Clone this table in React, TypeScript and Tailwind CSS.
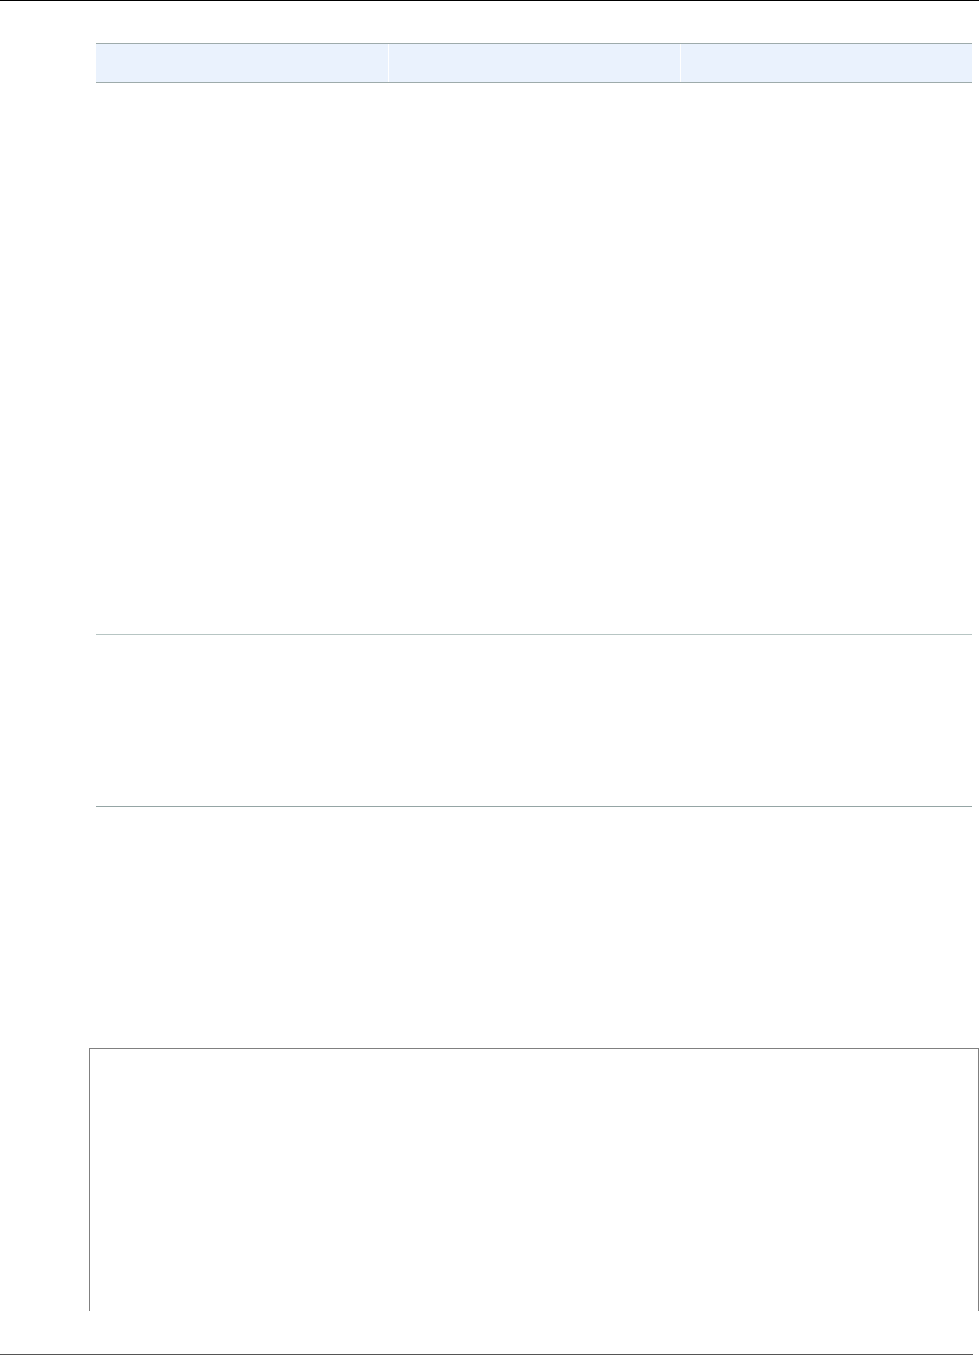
import React from "react";

const App: React.FC = () => {
  return (
    <div className="w-[979px] h-[1355px] bg-white border-t border-black overflow-hidden">
      {/* Table */}
      <div className="ml-[96px] mt-[42px] w-[876px]">
        <div className="grid grid-cols-[292px_292px_292px] h-[40px] bg-[#eaf2fd] border-t border-b border-[#9eabab]">
          <div />
          <div className="border-l border-white" />
          <div className="border-l border-white" />
        </div>
        <div className="h-[552px] border-b border-[#b7c5c3]" />
        <div className="h-[172px] border-b border-[#95a5a5]" />
      </div>

      {/* Code block, cut at page bottom */}
      <div className="ml-[89px] mt-[241px] w-[890px] h-[263px] border-t border-l border-r border-[#808080]" />

      {/* Footer rule */}
      <div className="mt-[43px] w-[973px] border-t border-[#555555]" />
    </div>
  );
};

export default App;
